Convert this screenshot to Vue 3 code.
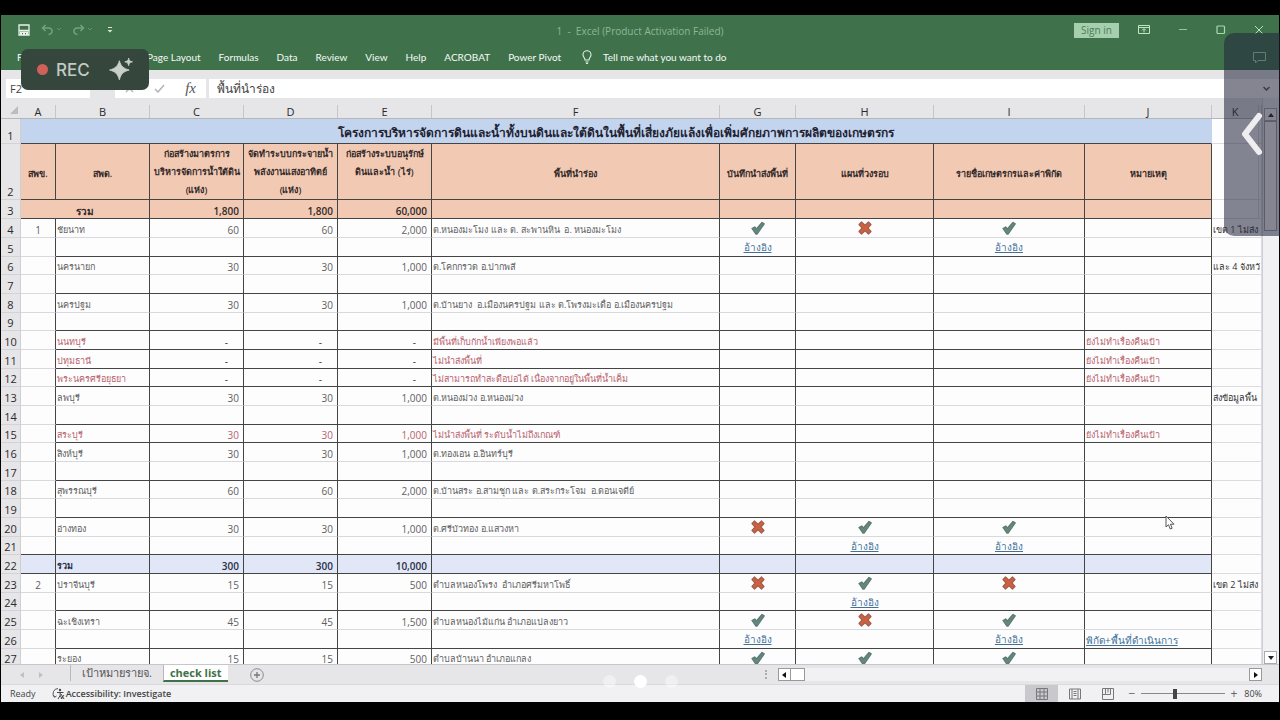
<script setup>
import { ref } from 'vue'

const menu = ['Page Layout', 'Formulas', 'Data', 'Review', 'View', 'Help', 'ACROBAT', 'Power Pivot']
const letters = ['A', 'B', 'C', 'D', 'E', 'F', 'G', 'H', 'I', 'J', 'K', '']
const nameBox = ref('F2')
const formula = ref('พื้นที่นำร่อง')
const zoom = ref(80)

const note = 'ยังไม่ทำเรื่องคืนเป้า'
const link = 'อ้างอิง'

// n: row number, c: cells A to K, line: dark rule below, red: struck-out province
const rows = [
  { n: 4, c: ['1', 'ชัยนาท', '60', '60', '2,000', 'ต.หนองมะโมง และ ต. สะพานหิน  อ. หนองมะโมง', 'ok', 'no', 'ok', '', 'เขต 1 ไม่ส่ง'] },
  { n: 5, c: ['', '', '', '', '', '', 'ref', '', 'ref', '', ''], line: true },
  { n: 6, c: ['', 'นครนายก', '30', '30', '1,000', 'ต.โคกกรวด อ.ปากพลี', '', '', '', '', 'และ 4 จังหวั'] },
  { n: 7, c: [], line: true },
  { n: 8, c: ['', 'นครปฐม', '30', '30', '1,000', 'ต.บ้านยาง  อ.เมืองนครปฐม และ ต.โพรงมะเดื่อ อ.เมืองนครปฐม'] },
  { n: 9, c: [], line: true },
  { n: 10, c: ['', 'นนทบุรี', '-', '-', '-', 'มีพื้นที่เก็บกักน้ำเพียงพอแล้ว', '', '', '', note], line: true, red: true },
  { n: 11, c: ['', 'ปทุมธานี', '-', '-', '-', 'ไม่นำส่งพื้นที่', '', '', '', note], line: true, red: true },
  { n: 12, c: ['', 'พระนครศรีอยุธยา', '-', '-', '-', 'ไม่สามารถทำสะดือบ่อได้ เนื่องจากอยู่ในพื้นที่น้ำเค็ม', '', '', '', note], line: true, red: true },
  { n: 13, c: ['', 'ลพบุรี', '30', '30', '1,000', 'ต.หนองม่วง อ.หนองม่วง', '', '', '', '', 'ส่งข้อมูลพื้น'] },
  { n: 14, c: [], line: true },
  { n: 15, c: ['', 'สระบุรี', '30', '30', '1,000', 'ไม่นำส่งพื้นที่ ระดับน้ำไม่ถึงเกณฑ์', '', '', '', note], line: true, red: true },
  { n: 16, c: ['', 'สิงห์บุรี', '30', '30', '1,000', 'ต.ทองเอน อ.อินทร์บุรี'] },
  { n: 17, c: [], line: true },
  { n: 18, c: ['', 'สุพรรณบุรี', '60', '60', '2,000', 'ต.บ้านสระ อ.สามชุก และ ต.สระกระโจม  อ.ดอนเจดีย์'] },
  { n: 19, c: [], line: true },
  { n: 20, c: ['', 'อ่างทอง', '30', '30', '1,000', 'ต.ศรีบัวทอง อ.แสวงหา', 'no', 'ok', 'ok'] },
  { n: 21, c: ['', '', '', '', '', '', '', 'ref', 'ref'], line: true, full: true },
  { n: 22, c: ['', 'รวม', '300', '300', '10,000'], line: true, full: true, total: true },
  { n: 23, c: ['2', 'ปราจีนบุรี', '15', '15', '500', 'ตำบลหนองโพรง  อำเภอศรีมหาโพธิ์', 'no', 'ok', 'no', '', 'เขต 2 ไม่ส่ง'] },
  { n: 24, c: ['', '', '', '', '', '', '', 'ref'], line: true },
  { n: 25, c: ['', 'ฉะเชิงเทรา', '45', '45', '1,500', 'ตำบลหนองไม้แก่น อำเภอแปลงยาว', 'ok', 'no', 'ok'] },
  { n: 26, c: ['', '', '', '', '', '', 'ref', '', 'ref', 'geo'], line: true },
  { n: 27, c: ['', 'ระยอง', '15', '15', '500', 'ตำบลบ้านนา อำเภอแกลง', 'ok', 'ok', 'ok'] }
]
</script>

<template>
  <div class="screen">
    <div class="window">
      <header class="ribbon">
        <div class="titlebar">
          <div class="quick">
            <button aria-label="Save"><svg width="12" height="12" viewBox="0 0 12 12"><path d="M1 1h10v10H1zM1 6.500h10" fill="none" stroke="#e9f3eb" stroke-width="1.300" /><path d="M2 7.500h8V11H8V9H7v2H5V9H4v2H2z" fill="#e9f3eb" /></svg></button>
            <button aria-label="Undo" class="dim"><svg width="20" height="12" viewBox="0 0 20 12"><path d="M4.500 1 1.500 4l3 3M1.500 4h6c5 0 4.500 6 0 6.500" fill="none" stroke="#74a27f" stroke-width="1.500" /><path d="m16 4 2 2 2-2" fill="none" stroke="#66956f" /></svg></button>
            <button aria-label="Redo" class="dim"><svg width="20" height="12" viewBox="0 0 20 12"><path d="m8.500 1 3 3-3 3M11.500 4h-6c-5 0-4.500 6 0 6.500" fill="none" stroke="#74a27f" stroke-width="1.500" /><path d="m16 4 2 2 2-2" fill="none" stroke="#66956f" /></svg></button>
            <button aria-label="Customize toolbar"><svg width="6" height="8" viewBox="0 0 6 8"><path d="M1 1.500h4" stroke="#d4e5d8" /><path d="M.5 4h5L3 6.500z" fill="#d4e5d8" /></svg></button>
          </div>
          <div class="doc">1&nbsp; -&nbsp; Excel (Product Activation Failed)</div>
          <div class="winbtns">
            <button class="sign">Sign in</button>
            <button aria-label="Ribbon display"><svg width="12" height="10" viewBox="0 0 12 10"><path d="M.5.5h11v8H.5zM.5 2.500h11M6 7.500V4M4 5.500l2-2 2 2" fill="none" stroke="#bfe3c6" /></svg></button>
            <button aria-label="Minimize"><svg width="10" height="10" viewBox="0 0 10 10"><path d="M1 4.500h8" stroke="#8fc79b" /></svg></button>
            <button aria-label="Maximize"><svg width="10" height="10" viewBox="0 0 10 10"><rect x="1" y="1" width="7.500" height="7.500" rx="1" fill="none" stroke="#a5dcb0" stroke-width="1.200" /></svg></button>
            <button aria-label="Close"><svg width="10" height="10" viewBox="0 0 10 10"><path d="m1 1 8 8M9 1 1 9" stroke="#b5e3be" /></svg></button>
          </div>
        </div>
        <nav class="menu">
          <button class="file">File</button>
          <button v-for="m in menu" :key="m">{{ m }}</button>
          <button class="tell"><svg width="10" height="14" viewBox="0 0 10 14"><path d="M3 10C3 8 1 7 1 4.700a4 4 0 0 1 8 0C9 7 7 8 7 10zM3.500 12h3M4 13.500h2" fill="none" stroke="#e3efe5" stroke-width="1.100" /></svg>Tell me what you want to do</button>
        </nav>
      </header>

      <div class="formula">
        <input v-model="nameBox" class="name" aria-label="Name box" />
        <div class="fx">
          <svg width="9" height="9" viewBox="0 0 9 9"><path d="m1 1 7 7M8 1 1 8" stroke="#b9b9bd" stroke-width="1.500" /></svg>
          <svg width="11" height="9" viewBox="0 0 11 9"><path d="m1 5 3 3 6-7" fill="none" stroke="#b3b3b8" stroke-width="1.500" /></svg>
          <i>fx</i>
        </div>
        <input v-model="formula" class="bar" aria-label="Formula" />
        <svg class="expand" width="7" height="5" viewBox="0 0 7 5"><path d="m.5 1 3 3 3-3" fill="none" stroke="#55555c" stroke-width="1.500" /></svg>
      </div>

      <main class="main">
        <div class="sheet">
          <table>
            <colgroup>
              <col class="w0" /><col class="wa" /><col class="wb" /><col class="wb" /><col class="wb" /><col class="wb" /><col />
              <col class="wg" /><col class="wh" /><col class="wi" /><col class="wj" /><col class="wk" /><col class="wl" />
            </colgroup>
            <thead>
              <tr>
                <th class="corner"><svg width="8" height="8" viewBox="0 0 8 8"><path d="M8 0v8H0z" fill="#bcbcc0" /></svg></th>
                <th v-for="(l, i) in letters" :key="i"><span>{{ l }}</span></th>
              </tr>
            </thead>
            <tbody>
              <tr class="r1">
                <th>1</th>
                <td colspan="10" class="title">โครงการบริหารจัดการดินและน้ำทั้งบนดินและใต้ดินในพื้นที่เสี่ยงภัยแล้งเพื่อเพิ่มศักยภาพการผลิตของเกษตรกร</td>
                <td class="k"></td><td></td>
              </tr>
              <tr class="r2">
                <th>2</th>
                <td>สพข.</td>
                <td>สพด.</td>
                <td class="multi">ก่อสร้างมาตรการ<br />บริหารจัดการน้ำใต้ดิน<br />(แห่ง)</td>
                <td class="multi">จัดทำระบบกระจายน้ำ<br />พลังงานแสงอาทิตย์<br />(แห่ง)</td>
                <td class="multi">ก่อสร้างระบบอนุรักษ์<br />ดินและน้ำ (ไร่)</td>
                <td>พื้นที่นำร่อง</td>
                <td>บันทึกนำส่งพื้นที่</td>
                <td>แผนที่วงรอบ</td>
                <td>รายชื่อเกษตรกรและค่าพิกัด</td>
                <td>หมายเหตุ</td>
                <td class="k"></td><td></td>
              </tr>
              <tr class="r3">
                <th>3</th>
                <td colspan="2" class="sum">รวม</td>
                <td>1,800</td><td>1,800</td><td>60,000</td>
                <td></td><td></td><td></td><td></td><td></td>
                <td class="k"></td><td></td>
              </tr>
              <tr v-for="r in rows" :key="r.n" class="row" :class="{ line: r.line, full: r.full, total: r.total, red: r.red }">
                <th>{{ r.n }}</th>
                <td v-for="i in 12" :key="i" :class="['c' + i, { dash: r.c[i - 1] === '-' }]">
                  <svg v-if="r.c[i - 1] === 'ok'" class="mark" width="14" height="14" viewBox="0 0 14 14"><path d="m1 7.500 2.700-1.500L5.500 8l5.500-6.500 2.200 1.300L6.200 13H4.800z" fill="#63897f" stroke="#5d7a72" stroke-width="1.300" stroke-linejoin="round" /></svg>
                  <svg v-else-if="r.c[i - 1] === 'no'" class="mark" width="14" height="14" viewBox="0 0 14 14"><path d="M3.500 1 7 4.200 10.500 1 13 3.500 9.900 7l3.100 3.500-2.500 2.500L7 9.800 3.500 13 1 10.500 4.100 7 1 3.500z" fill="#d05f42" stroke="#a0604c" stroke-width="1.200" stroke-linejoin="round" /></svg>
                  <a v-else-if="r.c[i - 1] === 'ref'" href="#">{{ link }}</a>
                  <a v-else-if="r.c[i - 1] === 'geo'" href="#">พิกัด+พื้นที่ดำเนินการ</a>
                  <template v-else>{{ r.c[i - 1] }}</template>
                </td>
              </tr>
            </tbody>
          </table>
          <svg class="cursor" width="10" height="15" viewBox="0 0 10 15"><path d="M1 1v11l2.500-2.300L5.200 14l2-.8-1.800-4H9z" fill="#fff" stroke="#55555c" /></svg>
        </div>
        <div class="vscroll">
          <button aria-label="Scroll up"><svg width="6" height="4" viewBox="0 0 6 4"><path d="M0 4h6L3 0z" fill="#222" /></svg></button>
          <div class="thumb"></div>
          <button class="down" aria-label="Scroll down"><svg width="6" height="4" viewBox="0 0 6 4"><path d="M0 0h6L3 4z" fill="#222" /></svg></button>
        </div>
      </main>

      <div class="tabs">
        <button class="arrow" aria-label="Previous sheet"><svg width="4" height="6" viewBox="0 0 4 6"><path d="M4 0v6L0 3z" fill="#c0c0c4" /></svg></button>
        <button class="arrow" aria-label="Next sheet"><svg width="4" height="6" viewBox="0 0 4 6"><path d="M0 0v6l4-3z" fill="#c0c0c4" /></svg></button>
        <button class="tab">เป้าหมายรายจ.</button>
        <button class="tab active">check list</button>
        <button class="plus" aria-label="New sheet"><svg width="14" height="14" viewBox="0 0 14 14"><circle cx="7" cy="7" r="6.300" fill="none" stroke="#8a8a8f" /><path d="M7 4v6M4 7h6" stroke="#77777c" stroke-width="1.300" /></svg></button>
        <div class="hscroll">
          <span class="grip"></span>
          <button aria-label="Scroll left"><svg width="4" height="6" viewBox="0 0 4 6"><path d="M4 0v6L0 3z" fill="#111" /></svg></button>
          <div class="hthumb"></div>
          <div class="track"></div>
          <button aria-label="Scroll right"><svg width="4" height="6" viewBox="0 0 4 6"><path d="M0 0v6l4-3z" fill="#111" /></svg></button>
        </div>
      </div>

      <footer class="status">
        <span class="ready">Ready</span>
        <svg width="13" height="13" viewBox="0 0 13 13"><path d="M6 1.500A5 5 0 0 0 2.500 10M1 8l1.500 2.300L4.500 9" fill="none" stroke="#55555a" /><circle cx="8" cy="3" r="1.200" fill="#44444a" /><path d="M5 5.500h6.500M8.200 5.500v3L6 12M8.200 8.500l2 3.500M9 7l3 5M12 8l-3 4" fill="none" stroke="#44444a" /></svg>
        <b>Accessibility: Investigate</b>
        <div class="views">
          <button class="on" aria-label="Normal"><svg width="12" height="12" viewBox="0 0 12 12"><path d="M.5.5h11v11H.5zM.5 4h11M.5 8h11M4 .5v11M8 .5v11" fill="none" stroke="#77777c" /></svg></button>
          <button aria-label="Page layout"><svg width="12" height="12" viewBox="0 0 12 12"><path d="M.5 1h11v10H.5zM3 1v10M9 1v10M4.500 3.500h3M4.500 5.500h3M4.500 7.500h3" fill="none" stroke="#77777c" /></svg></button>
          <button aria-label="Page break preview"><svg width="12" height="12" viewBox="0 0 12 12"><path d="M.5.500h11v11H.5zM3.500.5v6h5v-6M.5 6.500h3M6 .5v4" fill="none" stroke="#77777c" /></svg></button>
        </div>
        <span class="sgn">−</span>
        <input v-model="zoom" type="range" min="0" max="200" aria-label="Zoom" />
        <span class="sgn">+</span>
        <span class="pct">{{ zoom }}%</span>
      </footer>
    </div>

    <div class="rec">
      <span class="reddot"></span>REC
      <svg width="24" height="24" viewBox="0 0 22 22"><path d="M9.500 2.500c1.500 5 3.500 7 9 8.500-5.500 1.500-7.500 3.500-9 9-1.500-5.500-3.500-7.500-9-9 5.500-1.500 7.500-3.500 9-8.500zM18 0c.5 2.500 1 3 3.500 3.500C19 4 18.500 4.500 18 7c-.5-2.500-1-3-3.500-3.500C17 3 17.500 2.500 18 0z" fill="#c9cfca" stroke="#c9cfca" stroke-width=".8" stroke-linejoin="round" /></svg>
    </div>
    <button class="side" aria-label="Open panel">
      <svg class="bubble" width="13" height="12" viewBox="0 0 13 12"><path d="M.5.5h12v8H5L2.500 11V8.500h-2z" fill="none" stroke="#5f7f74" /></svg>
      <svg class="chev" width="22" height="44" viewBox="0 0 22 44"><path d="M18 4 4 22l14 18" fill="none" stroke="#eeeef0" stroke-width="6" stroke-linecap="round" stroke-linejoin="round" /></svg>
    </button>
    <div class="dots"><i></i><i class="cur"></i><i></i></div>
  </div>
</template>

<style>
body { margin: 0; background: #000; }
</style>

<style scoped>
* { box-sizing: border-box; }
button { border: 0; background: none; padding: 0; margin: 0; font: inherit; color: inherit; display: flex; align-items: center; justify-content: center; }
input { border: 0; outline: 0; margin: 0; font: inherit; min-width: 0; }
.screen { position: relative; height: 100vh; padding: 15px 1px 18px; background: #000; overflow: hidden; font-family: "Open Sans", "Noto Sans", sans-serif; font-size: 10px; }
.window { display: flex; flex-direction: column; height: 100%; background: #e6e5e8; }

.ribbon { background: #3f724b; color: #e4efe6; height: 55px; flex: none; }
.titlebar { display: flex; justify-content: space-between; height: 30px; align-items: center; position: relative; }
.quick { display: flex; align-items: center; gap: 11px; padding-left: 17px; }
.quick .dim + .dim { margin-right: 4px; }
.doc { position: absolute; left: 0; right: 0; text-align: center; color: #8fb698; font-size: 10px; pointer-events: none; line-height: 30px; top: 1px; }
.winbtns { display: flex; align-items: center; gap: 28px; padding-right: 15px; }
.sign { background: #a5cfae; color: #4d7d58; width: 45px; height: 15px; font-size: 10px; margin-right: -9px; }
.menu { display: flex; align-items: center; gap: 18px; padding: 0 0 1px 16px; height: 25px; white-space: nowrap; font-family: Lato, sans-serif; font-size: 10px; color: #f6faf7; }
.file { width: 112px; justify-content: flex-start; }
.tell { gap: 11px; margin-left: 3px; }

.formula { flex: none; display: flex; align-items: center; height: 28px; padding: 9px 0 0 5px; position: relative; }
.formula input { height: 19px; background: #fff; color: #444; }
.name { width: 84px; padding: 0 4px; font-size: 11px; }
.fx { margin-left: 25px; width: 91px; height: 19px; background: #fff; display: flex; align-items: center; justify-content: space-between; padding: 0 10px; }
.fx i { font: italic 15px "Liberation Serif", serif; color: #555; }
.bar { flex: 1; margin-left: 3px; padding: 0 8px; font-size: 12px; }
.expand { position: absolute; right: 9px; bottom: 7px; }

.main { flex: 1; min-height: 0; display: flex; }
.sheet { flex: 1; min-width: 0; overflow: hidden; position: relative; background: #fdfdfe; }
table { width: 100%; table-layout: fixed; border-collapse: separate; border-spacing: 0; color: #606060; font-size: 9px; }
.w0 { width: 20px; } .wa { width: 35px; } .wb { width: 94px; } .wg { width: 76px; } .wh { width: 138px; }
.wi { width: 151px; } .wj { width: 127px; } .wk { width: 47px; } .wl { width: 3px; }
th { font-weight: 400; font-size: 11px; line-height: 14px; color: #2a2a2a; padding: 0; background: #e6e5e8; }
thead th { height: 21px; vertical-align: bottom; border-bottom: 1px solid #b5b5ba; }
thead th span { display: block; height: 13px; line-height: 14px; border-right: 1px solid #c6c6ca; }
.corner svg { display: block; margin: 0 3px 4px auto; }
tbody th { vertical-align: bottom; border-right: 1px solid #cfcfd3; border-bottom: 1px solid #d3d3d7; }
td { padding: 0; border-right: 1px solid #444; border-bottom: 1px solid #d9d9dd; white-space: pre; line-height: 14px; }
.r1 > * { height: 25px; } .r2 > * { height: 56px; } .r3 > * { height: 19px; }
.r1 td, .r2 td, .r3 td { border-bottom-color: #444; text-align: center; color: #33292a; }
.r1 .title { background: #c3d5ee; font-size: 12px; font-weight: 700; color: #223; border-right-color: #c3d5ee; line-height: 20px; padding-top: 4px; }
.r2 td, .r3 td { background: #f2cab3; line-height: 18px; font-weight: 600; }
.r2 td { padding-top: 4px; }
.r2 td.multi { vertical-align: top; padding-top: 1px; }
.r3 td { text-align: right; padding-right: 4px; padding-top: 3px; line-height: 14px; font-size: 10px; }
.r3 td.sum { text-align: center; padding-right: 0; }
tbody tr td.k, tbody tr td.k + td { background: #fdfdfe; border-color: #dcdce0; }
.row > * { height: 19px; }
.row:nth-child(3n) > * { height: 18px; }
.row td { padding-top: 3px; }
.line td { border-bottom-color: #444; }
.line td.c1 { border-bottom-color: #d9d9dd; }
.full td.c1 { border-bottom-color: #444; }
.row td.c11, .row td.c12 { border-color: #dcdce0; color: #333; }
.row td.c11 { border-right: 0; padding-left: 1px; font-weight: 500; }
.row td.c7, .row td.c8, .row td.c9 { padding-top: 0; font-size: 10px; }
.c1, .c7, .c8, .c9 { text-align: center; }
.c2, .c6, .c10 { padding-left: 1px; }
.c1, .c3, .c4, .c5 { font-size: 10px; }
.c3, .c4, .c5 { text-align: right; padding-right: 4px; }
.dash { padding-right: 15px; color: #333; }
.red .c2, .red .c6, .red .c10, .red .c3:not(.dash), .red .c4:not(.dash), .red .c5:not(.dash) { color: #b9626c; }
.total td { color: #2a2f45; font-weight: 600; }
.total td:not(.c11):not(.c12) { background: #e1e7f6; }
.mark { display: block; margin: 0 auto; }
a { color: #3f7199; text-decoration: underline; font-size: 10px; }
.cursor { position: absolute; right: 87px; top: 417px; }

.vscroll { width: 17px; background: #f1f1f3; border-left: 1px solid #d0d0d4; padding: 10px 2px 0 1px; display: flex; flex-direction: column; }
.vscroll button { height: 13px; background: #fff; border: 1px solid #aaaab0; }
.thumb { height: 110px; background: #fff; border: 1px solid #a0a0a8; }
.down { margin-top: auto; }

.tabs { flex: none; height: 20px; display: flex; align-items: center; border-top: 1px solid #c6c6ca; padding-left: 19px; background: #e6e5e8; }
.arrow { width: 4px; margin-right: 15px; }
.tab { height: 16px; align-self: flex-start; padding: 0 11px 0 11px; font-size: 11px; color: #555; border-left: 1px solid #b8b8bd; margin-left: 12px; white-space: nowrap; }
.tab.active { background: #fff; color: #3f724b; font-weight: 700; padding: 0 6px; margin: 0; border-bottom: 2px solid #3f724b; height: 17px; }
.plus { margin-left: 22px; }
.hscroll { display: flex; align-items: center; margin-left: auto; width: 41%; padding: 0 17px 0 2px; }
.grip { height: 9px; border-left: 2px dotted #aaaaaf; margin-right: 11px; }
.hscroll button { width: 13px; height: 13px; background: #fff; border: 1px solid #999; }
.hthumb { width: 14px; height: 13px; background: #fff; border: 1px solid #999; border-left: 0; }
.track { flex: 1; height: 13px; background: #f1f1f3; }

.status { flex: none; height: 18px; display: flex; align-items: center; background: #f1f1f3; border-top: 1px solid #dadade; color: #444; padding: 0 17px 0 9px; font-size: 9px; }
.ready { margin-right: 16px; }
.status b { font-weight: 600; margin-left: 1px; }
.views { display: flex; align-self: stretch; margin-left: auto; margin-right: 2px; }
.views button { width: 33px; }
.views .on { background: #c9c9cd; }
.sgn { width: 12px; text-align: center; font-size: 12px; line-height: 14px; color: #666; }
.status input { appearance: none; width: 84px; height: 10px; margin: 0 3px; background: linear-gradient(#88888c, #88888c) center / 100% 1px no-repeat; }
.status input::-webkit-slider-thumb { appearance: none; width: 4px; height: 10px; background: #444; }
.pct { width: 22px; text-align: right; }

.rec { position: absolute; left: 21px; top: 49px; width: 128px; height: 41px; border-radius: 7px; background: #35463c; color: #c3cac5; font: 500 17px Inter, sans-serif; display: flex; align-items: center; padding: 0 16px; gap: 8px; }
.rec svg { margin-left: auto; }
.reddot { width: 11px; height: 11px; border-radius: 50%; background: #d0605a; }
.side { position: absolute; right: 0; top: 33px; width: 56px; height: 203px; border-radius: 10px 0 0 10px; background: rgba(36, 38, 58, 0.56); }
.bubble { position: absolute; left: 29px; top: 19px; }
.chev { position: absolute; left: 17px; top: 79px; }
.dots { position: absolute; left: 0; right: 0; bottom: 32px; display: flex; justify-content: center; gap: 18px; }
.dots i { width: 13px; height: 13px; border-radius: 50%; background: rgba(255, 255, 255, 0.4); }
.dots .cur { background: #fff; }
</style>
